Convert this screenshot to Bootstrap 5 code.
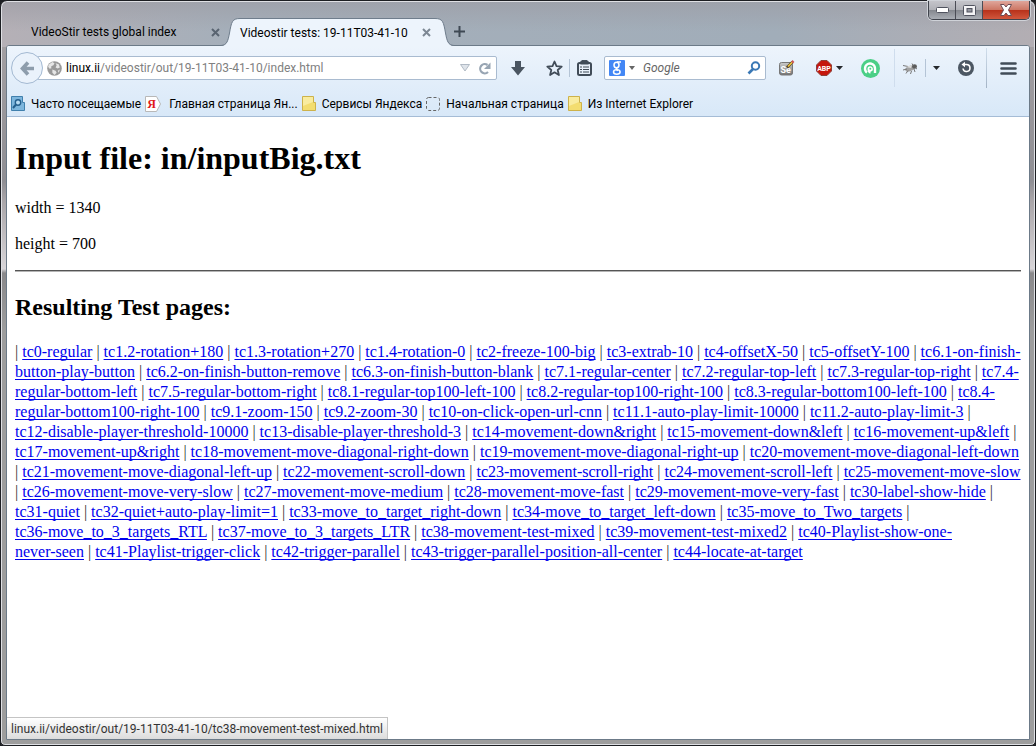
<!DOCTYPE html>
<html lang="ru">
<head>
<meta charset="utf-8">
<meta name="viewport" content="width=device-width, initial-scale=1">
<title>Videostir tests: 19-11T03-41-10</title>
<link href="https://cdn.jsdelivr.net/npm/bootstrap@5.3.0/dist/css/bootstrap.min.css" rel="stylesheet">
<style>
body{background:#1c1e22;color:#000}
.win{font:12px/16px Roboto,"Open Sans",sans-serif;min-height:100vh;border:1px solid #1c1e22;border-radius:7px 7px 5px 5px;padding:0 5px 5px;
 background:linear-gradient(#9c9ca4aa,#a3aeba00) top/100% 30px no-repeat,linear-gradient(90deg,#b5b0b6 0,#a5afba 22%,#a1adb9 75%,#b3aeb3 100%) top/100% 46px no-repeat,linear-gradient(#a9a5a8 0,#8f8e93 180px,#aaa6a9 200px,#d8d5d8 268px,#8a898b 272px,#9d9d9d 330px) #9d9d9d;box-shadow:inset 0 0 0 1px #dfe0e4}
.strip{height:44px}
.strip button,.bars button{border:0;background:none;padding:0;line-height:0;display:flex;align-items:center;justify-content:center;flex:none}
.tabs{padding-top:17px}
.tab-off{width:215px;height:27px;padding:1px 1px 0 25px}
.tab-on{height:28px;background:#edf4fc;border-top:1px solid #6f7d8c;width:195px;padding-right:4px;position:relative;z-index:1}
.edge{width:19px;height:28px;flex:none;position:relative;z-index:1}
.tab-link{color:#000;text-decoration:none;white-space:nowrap}
.strip .ctl{height:19px;border:1px solid #40434c;border-top:0;border-radius:0 0 5px 5px;overflow:hidden;box-shadow:0 0 0 1px #cfd2d8}
.strip .ctl button{border-right:1px solid #4a4c55;width:27px;background:linear-gradient(#c4c4ca 0,#b0b1b7 48%,#85888f 52%,#a9adb4)}
.strip .ctl .shut{width:46px;border:0;background:linear-gradient(#dfa69b 0,#cd7765 48%,#b8321b 52%,#d1573d)}
.inner{border:1px solid #6c7a88;border-radius:3px 3px 0 0;background:#fff}
.bars{background:linear-gradient(#edf4fc,#d8e8f8);border-bottom:1px solid #a5bcd6;border-radius:2px 2px 0 0}
.tools{height:44px;padding-left:4px}
.field{height:24px;background:#fff;border:1px solid #a9bbd0;border-radius:2px}
.field input{border:0;outline:0;background:none;padding:0;width:100%;min-width:0;color:#000}
.field input::placeholder{color:#666;opacity:1;font-style:italic}
.where{margin-left:-6px;padding:0 5px 0 9px}
.where a{color:#808080;text-decoration:none}
.find{width:162px;padding:0 4px;margin-left:6px}
.bars .back{width:32px;height:32px;border:1px solid #a3b9d2;border-radius:50%;background:#eaf2fb;z-index:1}
.w42{width:42px}.w40{width:40px}.w30{width:30px}.w28{width:28px}.w20{width:20px}
.rule{width:1px;height:18px;background:#b4c4d6}
.rule-tall{height:40px;background:linear-gradient(#d0deec,#a4b4c6)}
.rule-soft{height:38px;background:#cfdded}
.marks{height:26px;padding:2px 4px 0;gap:4px}
.marks a{color:#000;text-decoration:none;white-space:nowrap;display:flex;align-items:center;gap:5px}
.marks .gap-wide{gap:7px}
.page{font:16px/20px "Liberation Serif",serif;padding:23px 8px 28px}
.page h1{font:bold 32px/37px "Liberation Serif",serif;margin-bottom:21px}
.page h2{font:bold 24px/27px "Liberation Serif",serif;margin:22px 0 21px}
.page hr{border:0;border-top:1px solid #555;border-bottom:1px solid #b4b4b4;opacity:1;margin:16px 0}
.page a{color:#00e;text-decoration:underline;text-decoration-skip-ink:none;text-underline-offset:2px}
.links{color:#333}
.links a,.seg{white-space:nowrap}
.status{height:22px;padding:3px 4px;background:linear-gradient(#fff,#dcdcdc);border:1px solid #c4c4c4;border-left:0;border-bottom:0;color:#333}
</style>
</head>
<body>
<div class="win d-flex flex-column">
 <header class="strip d-flex">
  <nav class="tabs d-flex flex-grow-1" aria-label="Tabs">
   <div class="tab-off d-flex align-items-center justify-content-between">
    <a class="tab-link" href="#">VideoStir tests global index</a>
    <button aria-label="Close tab"><svg width="9" height="9"><path d="M1 1l7 7M8 1l-7 7" stroke="#596471" stroke-width="2"/></svg></button>
   </div>
   <svg class="edge" viewBox="0 0 19 28"><path d="M0 28C6 28 7 23 8.500 15 10.500 4 11 .5 19 .5V28z" fill="#edf4fc"/><path d="M0 27.500C6 27 7 23 8.500 15 10.500 4 11 .5 19 .5" fill="none" stroke="#6f7d8c"/></svg>
   <div class="tab-on d-flex align-items-center justify-content-between">
    <a class="tab-link" href="#">Videostir tests: 19-11T03-41-10</a>
    <button aria-label="Close tab"><svg width="9" height="9"><path d="M1 1l7 7M8 1l-7 7" stroke="#7d8894" stroke-width="2"/></svg></button>
   </div>
   <svg class="edge" viewBox="0 0 19 28"><path d="M19 28C13 28 12 23 10.500 15 8.500 4 8 .5 0 .5V28z" fill="#edf4fc"/><path d="M19 27.500C13 27 12 23 10.500 15 8.500 4 8 .5 0 .5" fill="none" stroke="#6f7d8c"/></svg>
   <button aria-label="New tab"><svg width="11" height="11"><path d="M5.500 0V11M0 5.500H11" stroke="#3f4954" stroke-width="2"/></svg></button>
  </nav>
  <div class="ctl d-flex">
   <button aria-label="Minimize"><svg width="13" height="6"><rect x=".5" y=".5" width="12" height="5" rx="1" fill="#fff" stroke="#50535f"/></svg></button>
   <button aria-label="Maximize"><svg width="13" height="11"><rect x=".5" y=".5" width="12" height="10" rx="1" fill="#f4f4f6" stroke="#50535f"/><rect x="4" y="3.500" width="5" height="3.500" fill="#9497a0" stroke="#50535f"/></svg></button>
   <button class="shut" aria-label="Close"><svg width="14" height="12" viewBox="0 0 14 12"><path d="M1.500 .5h3.500l2 2.500 2-2.500h3.500L9.500 6l3 5.500H9L7 9l-2 2.500H1.500L4.500 6z" fill="#fff" stroke="#6b4c55"/></svg></button>
  </div>
 </header>
 <div class="inner flex-grow-1 position-relative">
  <div class="bars">
   <div class="tools d-flex align-items-center">
    <button class="back" aria-label="Back"><svg width="15" height="15"><path d="M8 1.500L2.500 7.500 8 13.500M3 7.500h11" fill="none" stroke="#8e9dac" stroke-width="3.600"/></svg></button>
    <div class="field where d-flex align-items-center flex-grow-1 gap-1">
     <svg width="15" height="15" class="flex-shrink-0" viewBox="0 0 14 14"><circle cx="7" cy="7" r="6.800" fill="#999"/><path d="M2 3l3-2 2 1-1 2-2 1v2L2 7 1 5zM8 2l3 1 1 3-2 1-2-1 1-2zM5 8l3 1 1 2-2 2-2-2zM10 9l2-1-1 3z" fill="#e6e6e6"/></svg>
     <div class="flex-grow-1 text-nowrap"><a href="#"><span class="text-black">linux.ii</span>/videostir/out/19-11T03-41-10/index.html</a></div>
     <button aria-label="History list"><svg width="10" height="8"><path d="M.5.5h9L5 7z" fill="#dfe4ea" stroke="#b1bac5"/></svg></button>
     <button class="ms-1" aria-label="Reload"><svg width="13" height="13" viewBox="0 0 13 13"><path d="M10 10A4.600 4.600 0 1 1 9.500 3" fill="none" stroke="#98a5b3" stroke-width="2.200"/><path d="M12.500 .5v6.500H6z" fill="#98a5b3"/></svg></button>
    </div>
    <button class="w42" aria-label="Downloads"><svg width="14" height="15"><path d="M4 0h6v6h4l-7 8.500L0 6h4z" fill="#4a5561"/></svg></button>
    <button class="w30" aria-label="Bookmark"><svg width="17" height="17" viewBox="0 0 17 17"><path d="M8.500 1.500l2 4.700 5.200.4-4 3.400 1.200 5-4.400-2.700L4.100 15l1.200-5-4-3.400 5.200-.4z" fill="none" stroke="#414c58" stroke-width="1.800" stroke-linejoin="round"/></svg></button>
    <div class="rule"></div>
    <button class="w28" aria-label="Bookmarks"><svg width="15" height="16"><rect x="1" y="3" width="13" height="12" rx="1.500" fill="#e8f0f9" stroke="#414c58" stroke-width="2"/><path d="M4 4V1.500Q7.500-1 11 1.500V4zM3 7h2M6 7h6M3 9.500h2M6 9.500h6M3 12h2M6 12h6" fill="#414c58" stroke="#414c58" stroke-width="1.200"/></svg></button>
    <form class="field find d-flex align-items-center">
     <svg width="16" height="16" class="flex-shrink-0"><rect width="16" height="16" rx="1" fill="#4387f5"/><g fill="none" stroke="#fff" stroke-width="1.500"><ellipse cx="7.500" cy="5" rx="2.500" ry="2.800"/><path d="M8 2h4M9 7.500c-3 1-2 2 0 3"/><ellipse cx="7.800" cy="12" rx="3.300" ry="2.200"/></g></svg>
     <svg width="6" height="4" class="flex-shrink-0 mx-1"><path d="M0 0h6L3 4z" fill="#666"/></svg>
     <input class="ms-1" type="text" placeholder="Google" aria-label="Google">
     <button type="button" aria-label="Search"><svg width="14" height="14"><circle cx="8.500" cy="5" r="3.700" fill="none" stroke="#3a78b5" stroke-width="2"/><path d="M6 8L1.500 12.500" stroke="#3a78b5" stroke-width="2.600"/></svg></button>
    </form>
    <button class="w42" aria-label="Selenium"><svg width="16" height="16"><defs><linearGradient id="g" x2="0" y2="1"><stop stop-color="#ccc"/><stop offset="1" stop-color="#737373"/></linearGradient></defs><rect x=".5" y="2.500" width="13" height="12.500" rx="2" fill="url(#g)" stroke="#777"/><text x="1.500" y="13" font-size="9" font-weight="bold" fill="#fff">Se</text><path d="M8 7.500L13.500 2" stroke="#50402a" stroke-width="2.600"/><path d="M9 6.500l4.500-4.500" stroke="#f2c73b" stroke-width="1.600"/><path d="M13 2.500L14.500 1" stroke="#c55" stroke-width="2.500"/></svg></button>
    <button class="w42" aria-label="Adblock Plus"><svg width="16" height="16"><path d="M5 .5h6L15.500 5v6L11 15.500H5L.5 11V5z" fill="#c5160c" stroke="#8d4038"/><text x="8" y="11" font-size="7" font-weight="bold" text-anchor="middle" fill="#fff">ABP</text></svg><svg class="ms-1" width="7" height="4"><path d="M0 0h7L3.500 4z" fill="#25282c"/></svg></button>
    <button class="w40" aria-label="Advisor"><svg width="19" height="19"><circle cx="9.500" cy="9.500" r="9.500" fill="#4bcf86"/><path d="M6 13.500A5 5 0 1 1 14 9.500V14" fill="none" stroke="#fff" stroke-width="2.400"/><path d="M6.500 10a2.700 2.700 0 1 1 3 2.700v1.800c-2 0-3-2-3-4.500z" fill="#fff"/><circle cx="9.300" cy="9.800" r="1" fill="#4bcf86"/></svg></button>
    <div class="rule rule-soft ms-1"></div>
    <button class="w30" aria-label="Firebug"><svg width="17" height="13"><ellipse cx="8" cy="6.500" rx="5" ry="2.600" transform="rotate(-20 8 6.500)" fill="#a2a2a2"/><ellipse cx="12.500" cy="4.500" rx="2.500" ry="2.200" fill="#5c5c5c"/><path d="M1 3.500l5 1M1 8l4-1M4 11.500l2-3M8.500 12l1-3M13 10l-1-3M10 1.500l1 2M15 7l-1.500-1" fill="none" stroke="#777"/><path d="M4 5l6-2-1 3z" fill="#ddd"/></svg></button>
    <div class="rule"></div>
    <button class="w20" aria-label="Firebug menu"><svg width="7" height="4"><path d="M0 0h7L3.500 4z" fill="#25282c"/></svg></button>
    <button class="w40" aria-label="Restart"><svg width="16" height="16"><circle cx="8" cy="8" r="8" fill="#4c5763"/><path d="M5 4.500h3.500a3.500 3.500 0 1 1-3.500 4" fill="none" stroke="#fff" stroke-width="1.600"/><path d="M7 1.800v5.400L3.500 4.500z" fill="#fff"/></svg></button>
    <div class="rule rule-tall"></div>
    <button class="w42" aria-label="Menu"><svg width="17" height="13"><path d="M1.500 1.500h14M1.500 6.500h14M1.500 11.500h14" stroke="#414c58" stroke-width="2.600" stroke-linecap="round"/></svg></button>
   </div>
   <nav class="marks d-flex align-items-center" aria-label="Bookmarks">
    <a href="#"><svg width="15" height="16"><path d="M.5.5h11v6h2v8H.5z" fill="#7db6dd" stroke="#4080ad"/><circle cx="7" cy="6.500" r="2.700" fill="#b7dcf3" stroke="#245f8d" stroke-width="1.400"/><path d="M5 8.500L2 12" stroke="#245f8d" stroke-width="2"/></svg>Часто посещаемые</a>
    <a class="gap-wide" href="#"><svg width="17" height="16"><path d="M.5.5h11L15.500 8l-4 7.500H.5z" fill="#fff" stroke="#b8b8b8"/><text x="6.500" y="12" text-anchor="middle" font-family="Liberation Serif" font-weight="bold" font-size="12" fill="#e01818">Я</text></svg>Главная страница Ян...</a>
    <a href="#"><svg width="15" height="16"><path d="M.5.5h11v6h2v8H.5z" fill="#f3dd70" stroke="#cdb24b"/><path d="M1 1h10v5L1 10z" fill="#f9ec9f"/></svg>Сервисы Яндекса</a>
    <a href="#"><svg width="15" height="16"><rect x=".5" y="1.500" width="13" height="13" rx="2" fill="none" stroke="#666" stroke-dasharray="3 2"/></svg>Начальная страница</a>
    <a href="#"><svg width="15" height="16"><path d="M.5.5h11v6h2v8H.5z" fill="#f3dd70" stroke="#cdb24b"/><path d="M1 1h10v5L1 10z" fill="#f9ec9f"/></svg>Из Internet Explorer</a>
   </nav>
  </div>
  <main class="page">
   <h1>Input file: in/inputBig.txt</h1>
   <p>width = 1340</p>
   <p>height = 700</p>
   <hr>
   <h2>Resulting Test pages:</h2>
   <div class="links">
    | <a href="#">tc0-regular</a>
    | <a href="#">tc1.2-rotation+180</a>
    | <a href="#">tc1.3-rotation+270</a>
    | <a href="#">tc1.4-rotation-0</a>
    | <a href="#">tc2-freeze-100-big</a>
    | <a href="#">tc3-extrab-10</a>
    | <a href="#">tc4-offsetX-50</a>
    | <a href="#">tc5-offsetY-100</a>
    | <a class="text-wrap" href="#"><span class="seg">tc6.1-on-finish-</span><wbr><span class="seg">button-play-button</span></a>
    | <a href="#">tc6.2-on-finish-button-remove</a>
    | <a href="#">tc6.3-on-finish-button-blank</a>
    | <a href="#">tc7.1-regular-center</a>
    | <a href="#">tc7.2-regular-top-left</a>
    | <a href="#">tc7.3-regular-top-right</a>
    | <a class="text-wrap" href="#"><span class="seg">tc7.4-</span><wbr><span class="seg">regular-bottom-left</span></a>
    | <a href="#">tc7.5-regular-bottom-right</a>
    | <a href="#">tc8.1-regular-top100-left-100</a>
    | <a href="#">tc8.2-regular-top100-right-100</a>
    | <a href="#">tc8.3-regular-bottom100-left-100</a>
    | <a class="text-wrap" href="#"><span class="seg">tc8.4-</span><wbr><span class="seg">regular-bottom100-right-100</span></a>
    | <a href="#">tc9.1-zoom-150</a>
    | <a href="#">tc9.2-zoom-30</a>
    | <a href="#">tc10-on-click-open-url-cnn</a>
    | <a href="#">tc11.1-auto-play-limit-10000</a>
    | <a href="#">tc11.2-auto-play-limit-3</a>
    | <a href="#">tc12-disable-player-threshold-10000</a>
    | <a href="#">tc13-disable-player-threshold-3</a>
    | <a href="#">tc14-movement-down&amp;right</a>
    | <a href="#">tc15-movement-down&amp;left</a>
    | <a href="#">tc16-movement-up&amp;left</a>
    | <a href="#">tc17-movement-up&amp;right</a>
    | <a href="#">tc18-movement-move-diagonal-right-down</a>
    | <a href="#">tc19-movement-move-diagonal-right-up</a>
    | <a href="#">tc20-movement-move-diagonal-left-down</a>
    | <a href="#">tc21-movement-move-diagonal-left-up</a>
    | <a href="#">tc22-movement-scroll-down</a>
    | <a href="#">tc23-movement-scroll-right</a>
    | <a href="#">tc24-movement-scroll-left</a>
    | <a href="#">tc25-movement-move-slow</a>
    | <a href="#">tc26-movement-move-very-slow</a>
    | <a href="#">tc27-movement-move-medium</a>
    | <a href="#">tc28-movement-move-fast</a>
    | <a href="#">tc29-movement-move-very-fast</a>
    | <a href="#">tc30-label-show-hide</a>
    | <a href="#">tc31-quiet</a>
    | <a href="#">tc32-quiet+auto-play-limit=1</a>
    | <a href="#">tc33-move_to_target_right-down</a>
    | <a href="#">tc34-move_to_target_left-down</a>
    | <a href="#">tc35-move_to_Two_targets</a>
    | <a href="#">tc36-move_to_3_targets_RTL</a>
    | <a href="#">tc37-move_to_3_targets_LTR</a>
    | <a href="#">tc38-movement-test-mixed</a>
    | <a href="#">tc39-movement-test-mixed2</a>
    | <a href="#">tc40-Playlist-show-one-<br>never-seen</a>
    | <a href="#">tc41-Playlist-trigger-click</a>
    | <a href="#">tc42-trigger-parallel</a>
    | <a href="#">tc43-trigger-parallel-position-all-center</a>
    | <a href="#">tc44-locate-at-target</a>
   </div>
  </main>
  <div class="status position-absolute bottom-0 start-0 text-nowrap">linux.ii/videostir/out/19-11T03-41-10/tc38-movement-test-mixed.html</div>
 </div>
</div>
</body>
</html>
